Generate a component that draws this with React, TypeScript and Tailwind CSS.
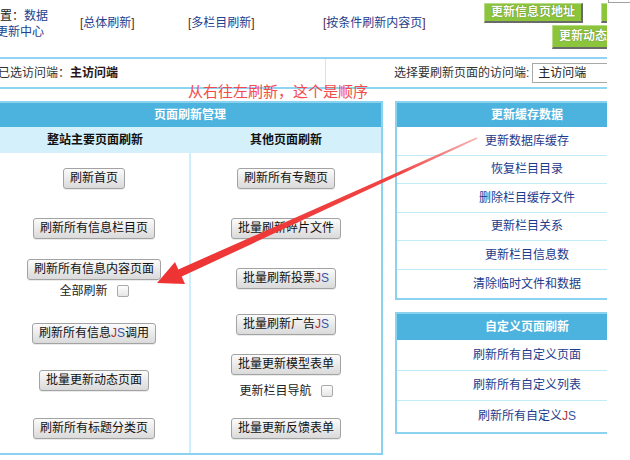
import React from "react";

function Btn({ children }: { children: React.ReactNode }) {
  return (
    <div className="h-[21px] px-[6px] border border-[#a3a3a3] rounded-[3px] bg-linear-to-b from-[#fbfbfb] to-[#dadada] text-[12px] leading-[19px] text-[#111] whitespace-nowrap shadow-[0_1px_0_rgba(0,0,0,0.08)]">
      {children}
    </div>
  );
}

function JS() {
  return (
    <span className="font-['Liberation_Sans',sans-serif]">
      <span className="text-[#b03535]">J</span>
      <span className="text-[#3555a5]">S</span>
    </span>
  );
}

function Check() {
  return (
    <div className="w-[12px] h-[12px] rounded-[2px] border border-[#a9a9a9] bg-linear-to-b from-[#fdfdfd] to-[#e6e6e6]" />
  );
}

function GreenBtn({ children, tall }: { children: React.ReactNode; tall?: boolean }) {
  return (
    <div
      className={
        "shrink-0 px-[6px] bg-[#8cc43c] border-t border-l border-t-[#b8dc86] border-l-[#b8dc86] border-b-2 border-r-2 border-b-[#6a6a6a] border-r-[#6a6a6a] text-white font-bold text-[12px] whitespace-nowrap [text-shadow:0_0_1px_#3d6a10] " +
        (tall ? "h-[24px] leading-[21px]" : "h-[20px] leading-[17px]")
      }
    >
      {children}
    </div>
  );
}

export default function App() {
  const rightRows1 = [
    "更新数据库缓存",
    "恢复栏目目录",
    "删除栏目缓存文件",
    "更新栏目关系",
    "更新栏目信息数",
    "清除临时文件和数据",
  ];
  const rightRows2 = ["刷新所有自定义页面", "刷新所有自定义列表"];

  return (
    <div className="relative w-[630px] h-[460px] bg-white overflow-hidden font-['Liberation_Sans','Noto_Sans_CJK_SC',sans-serif] text-[12px] text-[#222]">
      <div className="w-[607px] h-full overflow-hidden">
        <div className="w-[760px] -ml-[3px]">
          {/* top bar */}
          <div className="w-[610px] h-[59px] border-b-2 border-[#8fd5f2] flex items-start">
            <div className="shrink-0 w-[92px] -ml-[9px] pt-[8px] leading-[16px]">
              <div className="whitespace-nowrap">
                <span className="text-[#222]">位置：</span>
                <span className="text-[#21408e]">数据</span>
              </div>
              <div className="whitespace-nowrap ml-[8px] text-[#21408e]">更新中心</div>
            </div>
            <div className="shrink-0 w-[108px] pt-[15px] leading-[16px] text-[#24408e] whitespace-nowrap">
              <span className="text-[#5a2a2a]">[</span>总体刷新<span className="text-[#5a2a2a]">]</span>
            </div>
            <div className="shrink-0 w-[135px] pt-[15px] leading-[16px] text-[#24408e] whitespace-nowrap">
              <span className="text-[#5a2a2a]">[</span>多栏目刷新<span className="text-[#5a2a2a]">]</span>
            </div>
            <div className="shrink-0 w-[161px] pt-[15px] leading-[16px] text-[#24408e] whitespace-nowrap">
              <span className="text-[#5a2a2a]">[</span>按条件刷新内容页<span className="text-[#5a2a2a]">]</span>
            </div>
            <div className="shrink-0 pt-[3px] flex flex-col gap-[2px]">
              <div className="flex gap-[18px]">
                <GreenBtn>更新信息页地址</GreenBtn>
                <GreenBtn>更新栏目页地址</GreenBtn>
              </div>
              <div className="ml-[68px] flex">
                <GreenBtn tall>更新动态页面</GreenBtn>
              </div>
            </div>
          </div>

          {/* access row */}
          <div className="w-[610px] h-[30px] border-b-2 border-[#8fd5f2] flex items-stretch">
            <div className="shrink-0 w-[329px] border-r border-[#c4eaf9] flex items-center pl-[1px] whitespace-nowrap">
              <span className="text-[#333]">已选访问端：</span>
              <span className="font-bold text-[#2a1616]">主访问端</span>
            </div>
            <div className="shrink-0 flex items-center pl-[68px] whitespace-nowrap">
              <span className="text-[#333]">选择要刷新页面的访问端:</span>
              <div className="ml-[3px] w-[90px] h-[20px] border border-[#a8a8a8] bg-white flex items-center justify-between pl-[5px] pr-[4px]">
                <span className="text-[#222]">主访问端</span>
                <span className="text-[9px] text-[#222]">▼</span>
              </div>
            </div>
          </div>

          {/* panels */}
          <div className="mt-[12px] flex items-start">
            {/* left panel */}
            <div className="shrink-0 w-[386px] border-2 border-[#8bd2ef]">
              <div className="h-[24px] bg-[#4cb2de] text-white font-bold text-center leading-[24px]">页面刷新管理</div>
              <div className="h-[26px] bg-[#d4f0fb] grid grid-cols-[192px_1fr] font-bold text-[#111] leading-[26px] text-center">
                <div>整站主要页面刷新</div>
                <div>其他页面刷新</div>
              </div>
              <div className="grid grid-cols-[192px_1fr]">
                <div className="border-r-2 border-[#cdeefb] flex flex-col">
                  <div className="h-[50px] flex items-center justify-center"><Btn>刷新首页</Btn></div>
                  <div className="h-[50px] flex items-center justify-center"><Btn>刷新所有信息栏目页</Btn></div>
                  <div className="h-[50px] flex flex-col items-center justify-center gap-[4px]">
                    <Btn>刷新所有信息内容页面</Btn>
                    <div className="flex items-center gap-[9px] leading-[14px] text-[#222]">
                      <span>全部刷新</span>
                      <Check />
                    </div>
                  </div>
                  <div className="h-[50px] flex items-center justify-center pt-[10px]"><Btn>刷新所有信息<JS />调用</Btn></div>
                  <div className="h-[50px] flex items-center justify-center pt-[5px]"><Btn>批量更新动态页面</Btn></div>
                  <div className="h-[50px] flex items-center justify-center"><Btn>刷新所有标题分类页</Btn></div>
                </div>
                <div className="flex flex-col">
                  <div className="h-[50px] flex items-center justify-center"><Btn>刷新所有专题页</Btn></div>
                  <div className="h-[50px] flex items-center justify-center"><Btn>批量刷新碎片文件</Btn></div>
                  <div className="h-[50px] flex items-center justify-center"><Btn>批量刷新投票<JS /></Btn></div>
                  <div className="h-[50px] flex items-center justify-center pb-[8px]"><Btn>批量刷新广告<JS /></Btn></div>
                  <div className="h-[50px] flex flex-col items-center justify-center gap-[9px] pb-[5px]">
                    <Btn>批量更新模型表单</Btn>
                    <div className="flex items-center gap-[9px] leading-[14px] text-[#222]">
                      <span>更新栏目导航</span>
                      <Check />
                    </div>
                  </div>
                  <div className="h-[50px] flex items-center justify-center"><Btn>批量更新反馈表单</Btn></div>
                </div>
              </div>
            </div>

            {/* right column */}
            <div className="shrink-0 ml-[12px] w-[264px] flex flex-col gap-[12px]">
              <div className="border-2 border-[#8bd2ef]">
                <div className="h-[24px] bg-[#4cb2de] text-white font-bold text-center leading-[24px]">更新缓存数据</div>
                {rightRows1.map((t, i) => (
                  <div
                    key={t}
                    className={
                      "h-[28.5px] flex items-center justify-center text-[#1d3b8c] " +
                      (i < rightRows1.length - 1 ? "border-b border-[#c2eaf8]" : "")
                    }
                  >
                    {t}
                  </div>
                ))}
              </div>
              <div className="border-2 border-[#8bd2ef]">
                <div className="h-[26px] bg-[#4cb2de] text-white font-bold text-center leading-[26px]">自定义页面刷新</div>
                {rightRows2.map((t) => (
                  <div key={t} className="h-[30.5px] flex items-center justify-center text-[#1d3b8c] border-b border-[#c2eaf8]">
                    {t}
                  </div>
                ))}
                <div className="h-[30.5px] flex items-center justify-center text-[#1d3b8c]">
                  刷新所有自定义<JS />
                </div>
              </div>
            </div>
          </div>
        </div>
      </div>

      {/* top-right frame corner */}
      <div className="absolute left-[608px] top-[-12px] w-[40px] h-[15px] border border-[#a0a0a0] bg-white" />

      {/* red annotation */}
      <div className="absolute left-[188px] top-[83px] text-[15px] leading-[18px] text-[#f24c4c] whitespace-nowrap">
        从右往左刷新，这个是顺序
      </div>

      {/* red arrow */}
      <svg className="absolute left-0 top-0 pointer-events-none" width="630" height="460" viewBox="0 0 630 460">
        <defs>
          <linearGradient id="ag" x1="477" y1="138" x2="170" y2="278" gradientUnits="userSpaceOnUse">
            <stop offset="0" stopColor="#f26060" stopOpacity="0.5" />
            <stop offset="0.25" stopColor="#f03a3a" stopOpacity="0.95" />
            <stop offset="1" stopColor="#ee3333" />
          </linearGradient>
        </defs>
        <polygon
          points="157,283 175,262 178.3,269.4 476.7,137.3 477.3,138.7 181.7,276.6 185,284"
          fill="url(#ag)"
        />
      </svg>
    </div>
  );
}
